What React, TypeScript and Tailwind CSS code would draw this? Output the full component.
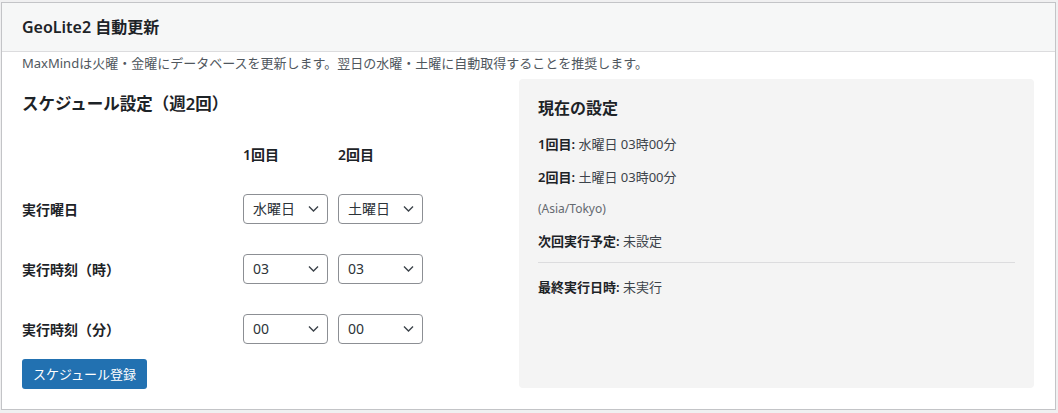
import { useState } from "react"

const font = "font-['Noto_Sans','Noto_Sans_CJK_JP',sans-serif]"

interface SelectProps {
  value: string
  options: string[]
  onChange: (v: string) => void
}

function Chevron() {
  return (
    <svg className="pointer-events-none absolute right-[9px] top-1/2 -translate-y-1/2" width="11" height="7" viewBox="0 0 11 7" fill="none">
      <path d="M1 1l4.5 4.5L10 1" stroke="#3c434a" strokeWidth="1.4" />
    </svg>
  )
}

function WpSelect({ value, options, onChange }: SelectProps) {
  return (
    <div className="relative w-[85px]">
      <select
        value={value}
        onChange={(e) => onChange(e.target.value)}
        className="h-[30px] w-full appearance-none rounded-[4px] border border-[#8c8f94] bg-white pl-[9px] pr-6 text-[14px] leading-[28px] text-[#2c3338] outline-none"
      >
        {options.map((o) => (
          <option key={o} value={o}>
            {o}
          </option>
        ))}
      </select>
      <Chevron />
    </div>
  )
}

const days = ["日曜日", "月曜日", "火曜日", "水曜日", "木曜日", "金曜日", "土曜日"]
const hours = Array.from({ length: 24 }, (_, i) => String(i).padStart(2, "0"))
const minutes = ["00", "15", "30", "45"]

export default function App() {
  const [day1, setDay1] = useState("水曜日")
  const [day2, setDay2] = useState("土曜日")
  const [hour1, setHour1] = useState("03")
  const [hour2, setHour2] = useState("03")
  const [min1, setMin1] = useState("00")
  const [min2, setMin2] = useState("00")

  const rows = [
    { label: "実行曜日", opts: days, a: [day1, setDay1], b: [day2, setDay2] },
    { label: "実行時刻（時）", opts: hours, a: [hour1, setHour1], b: [hour2, setHour2] },
    { label: "実行時刻（分）", opts: minutes, a: [min1, setMin1], b: [min2, setMin2] },
  ] as const

  return (
    <div className={`${font} min-h-screen bg-[#f0f0f1] pl-[1px] pt-[2px] text-[#1d2327]`}>
      <div className="w-[1055px] border border-[#c3c4c7] bg-white">
        {/* header */}
        <div className="flex h-[49px] items-center border-b border-[#dcdcde] bg-[#f6f7f7] px-5">
          <h2 className="text-[16px] font-semibold leading-[24px]">GeoLite2 自動更新</h2>
        </div>

        <p className="mt-[1px] px-5 text-[13px] leading-[20px] text-[#50575e]">
          MaxMindは火曜・金曜にデータベースを更新します。翌日の水曜・土曜に自動取得することを推奨します。
        </p>

        {/* content */}
        <div className="grid grid-cols-[477px_515px] gap-5 px-5 pb-5 pt-[6px]">
          <div className="flex flex-col">
            <h3 className="mt-[13px] text-[16.5px] font-semibold leading-[24px]">スケジュール設定（週2回）</h3>

            <div className="mt-[29px] grid grid-cols-[221px_95px_85px] text-[14px] font-semibold leading-[20px]">
              <div />
              <div>1回目</div>
              <div>2回目</div>
            </div>

            <div className="mt-[14px]">
              {rows.map((r) => (
                <div key={r.label} className="grid h-[60px] grid-cols-[221px_95px_85px] items-center">
                  <div className="text-[14px] font-semibold">{r.label}</div>
                  <WpSelect value={r.a[0]} options={[...r.opts]} onChange={r.a[1]} />
                  <WpSelect value={r.b[0]} options={[...r.opts]} onChange={r.b[1]} />
                </div>
              ))}
            </div>

            <div>
              <button
                type="button"
                className="h-[30px] rounded-[3px] bg-[#2271b1] px-[11px] text-[13px] leading-[28px] text-white"
              >
                スケジュール登録
              </button>
            </div>
          </div>

          <div className="h-[309px] rounded-[4px] bg-[#f4f4f4] px-[19px] pt-[17px] text-[13px] leading-[20px] text-[#3c434a]">
            <h3 className="text-[16px] font-semibold leading-[24px] text-[#1d2327]">現在の設定</h3>
            <p className="mt-[14px]">
              <span className="font-semibold text-[#1d2327]">1回目:</span> 水曜日 03時00分
            </p>
            <p className="mt-[13px]">
              <span className="font-semibold text-[#1d2327]">2回目:</span> 土曜日 03時00分
            </p>
            <p className="mt-3 text-[12px] text-[#646970]">(Asia/Tokyo)</p>
            <p className="mt-3">
              <span className="font-semibold text-[#1d2327]">次回実行予定:</span> 未設定
            </p>
            <hr className="mt-[11px] border-t border-[#dcdcde]" />
            <p className="mt-[14px]">
              <span className="font-semibold text-[#1d2327]">最終実行日時:</span> 未実行
            </p>
          </div>
        </div>
      </div>
    </div>
  )
}
